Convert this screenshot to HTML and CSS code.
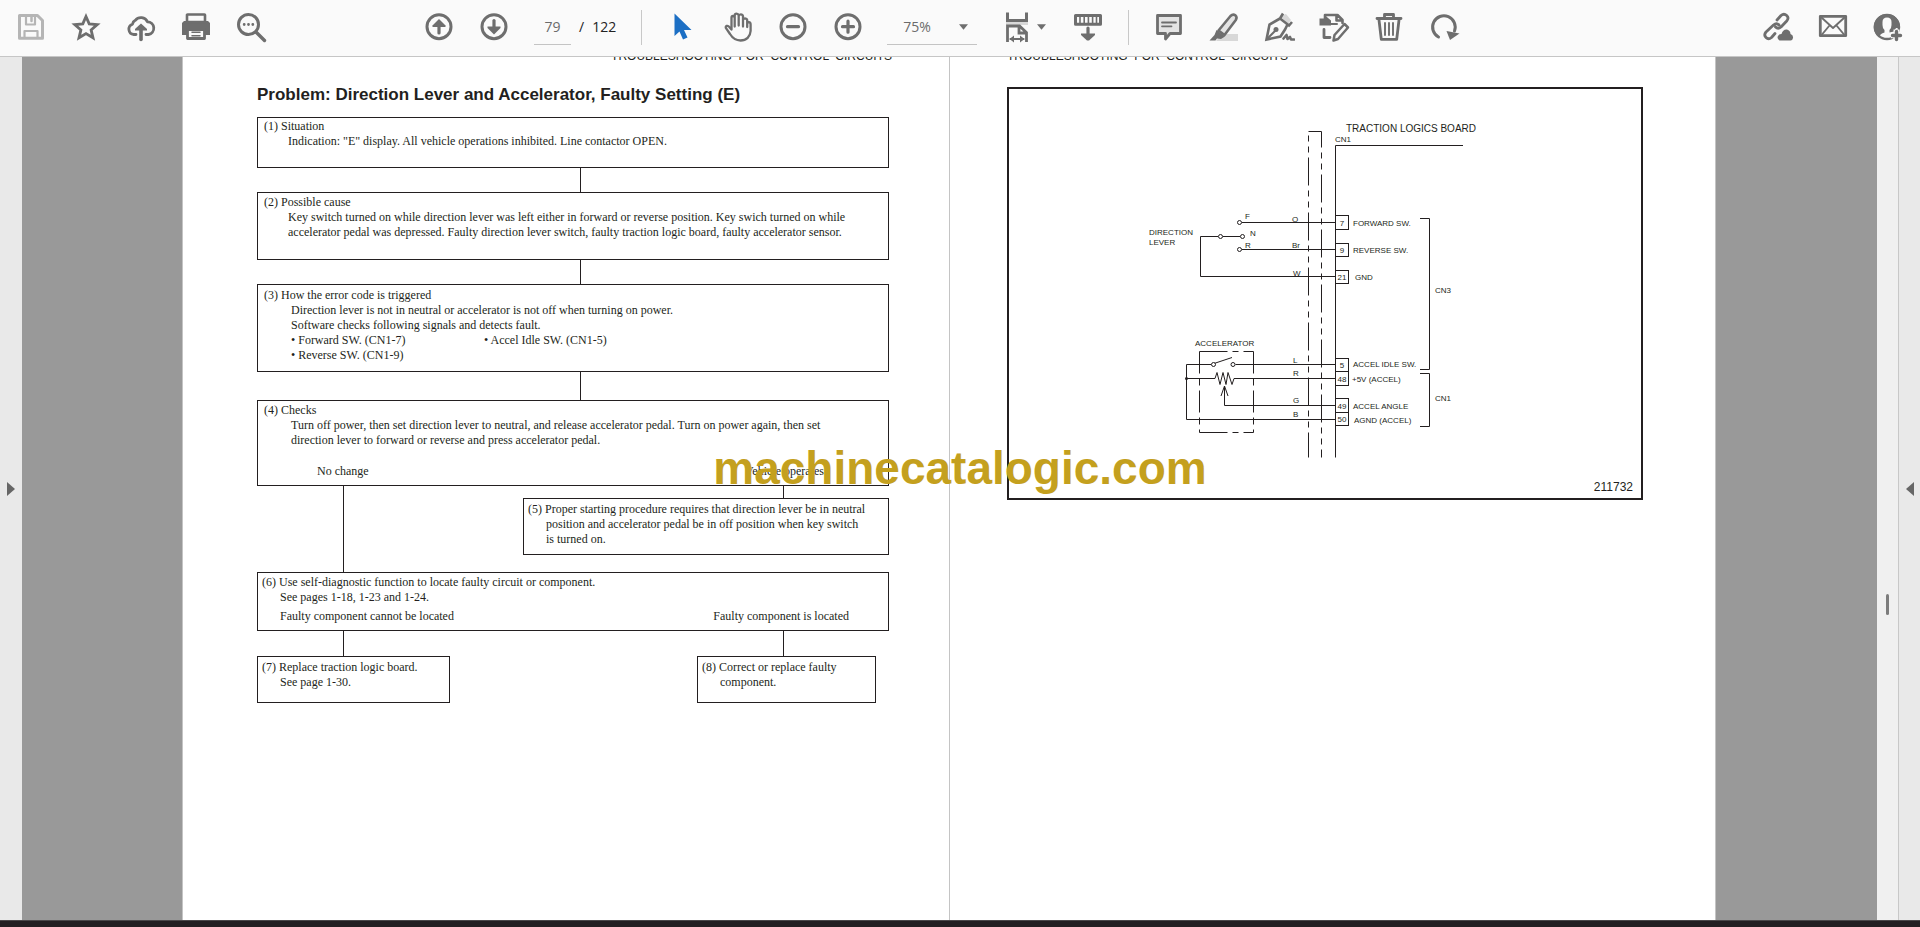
FILE: index.html
```html
<!DOCTYPE html>
<html lang="en">
<head>
<meta charset="utf-8">
<title>Service manual – page 79</title>
<link rel="stylesheet" href="styles.css">
</head>
<body>
<div class="app">
  <header class="toolbar">
    <div class="group group-file">
      <button class="tool tool-disabled" aria-label="Save" disabled>
        <svg class="icon" viewBox="0 0 32 32"><path d="M4.500 4.500H22.500L27.500 9.500V27.300H4.500Z" stroke-width="3"/><path d="M11 4V13.500H20V4M9.500 27V20H22.500V27" stroke-width="2.200"/><path d="M16.500 6V10" stroke-width="2.500"/></svg>
      </button>
      <button class="tool" aria-label="Star">
        <svg class="icon" viewBox="0 0 32 32"><path class="sharp" d="M16 5.500L19.200 12.900 27.200 13.600 21.100 18.900 23 26.800 16 22.600 9 26.800 10.900 18.900 4.800 13.600 12.800 12.900Z" stroke-width="2.800"/></svg>
      </button>
      <button class="tool" aria-label="Upload to cloud">
        <svg class="icon" viewBox="0 0 32 32"><path d="M11 23.500H8.800A5.300 5.300 0 0 1 7.500 13.200 5 5 0 0 1 10.300 9.300 7.300 7.300 0 0 1 22.500 10.800 6.400 6.400 0 0 1 23.500 23.500H21" stroke-width="2.800"/><path d="M16 16V28.500" stroke-width="3.600"/><path class="solid" d="M10 19.500V18L16 12.500 22 18V19.500Z"/></svg>
      </button>
      <button class="tool" aria-label="Print">
        <svg class="icon" viewBox="0 0 32 32"><path class="solid" d="M4 10H28L30 12V24H2V12Z"/><path class="paper" d="M7 11V4Q7 3.500 7.500 3.500H24.500Q25 3.500 25 4V11Z" stroke-width="2.600"/><path class="paper" d="M7.500 18.500H24.500V27.500H7.500Z" stroke-width="2.800"/><path d="M12 21.300H20M12 24.700H20" stroke-width="1.500"/></svg>
      </button>
      <button class="tool" aria-label="Find">
        <svg class="icon" viewBox="0 0 32 32"><circle cx="13.500" cy="13.500" r="10" stroke-width="3"/><path d="M21 21L29.500 29.500" stroke-width="3.400"/><path d="M9.200 13.500V13.600M13.500 13.500V13.600M17.800 13.500V13.600" stroke-width="2.800"/></svg>
      </button>
    </div>

    <div class="group group-nav">
      <button class="tool" aria-label="Previous page">
        <svg class="icon" viewBox="0 0 32 32"><circle cx="16" cy="15.700" r="12" stroke-width="3"/><path d="M16 11V22" stroke-width="3.200"/><path class="solid" d="M9.500 16V14.500L16 8 22.500 14.500V16Z"/></svg>
      </button>
      <button class="tool" aria-label="Next page">
        <svg class="icon" viewBox="0 0 32 32"><circle cx="16" cy="15.700" r="12" stroke-width="3"/><path d="M16 9.500V20" stroke-width="3.200"/><path class="solid" d="M9.500 15.500V17L16 23.500 22.500 17V15.500Z"/></svg>
      </button>
    </div>

    <div class="page-count">
      <input class="page-input" type="text" value="79" aria-label="Page number">
      <span>/</span>
      <span>122</span>
    </div>
    <span class="divider"></span>

    <div class="group">
      <button class="tool" aria-label="Select">
        <svg class="icon" viewBox="0 0 32 32"><path class="pointer" d="M7.500 2.500V25L12.500 20.500 16 28.500 20.500 26.500 17 19H24.500Z"/></svg>
      </button>
      <button class="tool" aria-label="Hand">
        <svg class="icon" viewBox="0 0 32 32"><path d="M9.500 18.500V6.800Q9.500 5 11 5T12.700 6.800V15.500M12.700 8V4.500Q12.800 2.700 14.500 2.700T16.700 4.500V14.500M16.700 5Q17 3.400 18.800 3.400T21 5.200V15.500M21 8.500Q21.500 7.300 23 7.300 25 7.500 25.200 9V16M25.200 12.500Q25.600 11.200 26.800 11.200 28.600 11.400 28.600 13.500V20C28.300 25.500 24.500 29.500 18.500 29.500 13 29.500 10.500 27 8 23L4 17.200Q3.200 15.500 4.700 14.900 6.200 14.500 7.300 15.900L9.500 18.500" stroke-width="2.300"/></svg>
      </button>
      <button class="tool" aria-label="Zoom out">
        <svg class="icon" viewBox="0 0 32 32"><circle cx="16" cy="15.700" r="12" stroke-width="3"/><path d="M10.500 15.700H21.500" stroke-width="3.200"/></svg>
      </button>
      <button class="tool" aria-label="Zoom in">
        <svg class="icon" viewBox="0 0 32 32"><circle cx="16" cy="15.700" r="12" stroke-width="3"/><path d="M10.500 15.700H21.500M16 10.200V21.200" stroke-width="3.200"/></svg>
      </button>
    </div>

    <div class="zoom">
      <select class="zoom-select" aria-label="Zoom level"><option>75%</option></select>
      <svg class="caret" viewBox="0 0 10 6"><path class="solid" d="M0 0H10L5 6Z"/></svg>
    </div>

    <button class="tool tool-menu" aria-label="Page fit">
      <svg class="icon" viewBox="0 0 32 32"><path class="tint" d="M5 10H27V14H5Z"/><path class="sharp" d="M6.500 1.500V9.500H25.500V1.500" stroke-width="3"/><path class="sharp" d="M6.500 31V15H18.500L25.500 21.500V31M18 15V22H25" stroke-width="2.800"/><path d="M9.500 28H22.500" stroke-width="2"/><path class="solid" d="M8.500 28L13 24.500V31.500ZM23.500 28L19 24.500V31.500Z"/></svg>
      <svg class="caret caret-small" viewBox="0 0 10 6"><path class="solid" d="M0 0H10L5 6Z"/></svg>
    </button>
    <button class="tool tool-keys" aria-label="Scrolling mode">
      <svg class="icon" viewBox="0 0 32 32"><path d="M3.500 4.500H28.500V13.300H3.500Z" stroke-width="3"/><path class="sharp" d="M8 6V12M12.200 6V12M16.400 6V12M20.600 6V12M24.500 6V12" stroke-width="1.600"/><path d="M16 17V27" stroke-width="3.200"/><path class="solid" d="M9 22.500H23V24L17 29.500H15L9 24Z"/></svg>
    </button>
    <span class="divider divider-tools"></span>

    <div class="group">
      <button class="tool" aria-label="Add comment">
        <svg class="icon" viewBox="0 0 32 32"><path class="tint-outline" d="M4.500 4.500H27.500V22.500H17L12.500 28V22.500H4.500Z" stroke-width="2.800"/><path d="M9 11.500H23M9 15.300H18.500" stroke-width="1.800"/></svg>
      </button>
      <button class="tool" aria-label="Highlight text">
        <svg class="icon" viewBox="0 0 32 32"><path class="tint" d="M14 23H30V30H8Z"/><path class="tint-outline" d="M10.500 19.500L22.500 5Q25 2.500 27.300 4.300 29.500 6.200 27.800 9L16.500 24Z" stroke-width="2.600"/><path class="solid" d="M8.500 19L17 25.500 13 28 9 27.500 7.500 29.500H1.500L6.500 24Z"/></svg>
      </button>
      <button class="tool" aria-label="Sign">
        <svg class="icon" viewBox="0 0 32 32"><path class="tint" d="M17 5L23 3 28 9 25 13Z"/><path class="sharp" d="M20 2.500L17 7.500 26 14.500 29 11M17 7.500L6.500 13.500 3.500 28.500 17.500 25.500 22 18.500 24.500 13.500" stroke-width="2.600"/><path d="M4 28L12.500 19.500" stroke-width="2"/><circle class="solid" cx="13" cy="18.500" r="2.500"/><path d="M20.500 27.500L23.500 24 24.500 28 27 26 28 28.500H31" stroke-width="2.600"/></svg>
      </button>
      <button class="tool" aria-label="Edit document">
        <svg class="icon" viewBox="0 0 32 32"><path class="solid" d="M1.500 7.500H6.500V4L13 9.500V14.500H1.500Z"/><path d="M7 8V4H19.500L24.500 9V12M18.500 4V9.500H24" stroke-width="2.600"/><path d="M6 18.500V26.500H12" stroke-width="2.800"/><path class="paper" d="M15.500 29.500L16.500 24 26.500 13 30 16.500 20 28Z" stroke-width="2.500"/><path d="M12 13H19" stroke-width="2"/></svg>
      </button>
      <button class="tool" aria-label="Delete">
        <svg class="icon" viewBox="0 0 32 32"><path d="M4 7.500H28M11.500 6V3.500H20.500V6" stroke-width="2.800"/><path d="M6 9L8.300 28.300H23.700L26 9" stroke-width="2.800"/><path d="M12 12V24M16 12V24M20 12V24" stroke-width="1.900"/></svg>
      </button>
      <button class="tool" aria-label="Rotate">
        <svg class="icon" viewBox="0 0 32 32"><path d="M10.500 26A11.300 11.300 0 1 1 26.500 20" stroke-width="3"/><path class="solid" d="M18.500 20L31.500 22.500 22 29Z"/></svg>
      </button>
    </div>

    <div class="group group-share">
      <button class="tool" aria-label="Share link">
        <svg class="icon" viewBox="0 0 32 32"><path d="M15 9L19 4.500Q22 2 24.700 4.500 27.300 7 24.700 10L19 16Q16 18.500 13.500 16M17 14Q14.500 11.500 11.500 14L4 21Q1.500 24 4 26.500 6.500 29 9.500 26.500L13 22.500" stroke-width="2.800"/><path class="solid" d="M17.500 29.500Q14.500 27.500 16 25 17 22.800 19.500 23 21 18 25 18.500 28.500 19.500 28.500 23 31.500 24 31 27 30.500 29.500 28.500 29.500Z"/></svg>
      </button>
      <button class="tool" aria-label="Send by email">
        <svg class="icon" viewBox="0 0 32 32"><path d="M3.300 5.300H28.700V24.700H3.300Z" stroke-width="2.800"/><path d="M4.500 6.500L16 17 27.500 6.500M5 23.500L12.500 14.500M27 23.500L19.500 14.500" stroke-width="1.900"/></svg>
      </button>
      <button class="tool" aria-label="Share with others">
        <svg class="icon" viewBox="0 0 32 32"><circle cx="15" cy="16" r="12" stroke-width="2.400"/><path class="solid" d="M15 3A13 13 0 0 0 7 26.500Q8 22.500 12.500 21.500V19Q10.500 17.500 10.500 14V11Q10.500 6.500 15 6.500T19.500 11V14Q19.500 17.500 17.500 19V21.500L22 20.500 24 17H28A13 13 0 0 0 15 3Z"/><path class="halo" d="M24.500 18.500V30M18.800 24.200H30.200" stroke-width="6"/><path d="M24.500 20.500V28.500M20.500 24.500H28.500" stroke-width="3.400"/></svg>
      </button>
    </div>
  </header>

  <main class="viewer">
    <aside class="rail">
      <button class="rail-toggle" aria-label="Show navigation pane"><svg class="arrow" viewBox="0 0 8 14"><path class="solid" d="M0 0L8 7 0 14Z"/></svg></button>
    </aside>

    <div class="workspace">
      <article class="sheet sheet-left">
        <p class="running-head running-head-left">TROUBLESHOOTING &nbsp;FOR &nbsp;CONTROL &nbsp;CIRCUITS</p>
        <h1 class="title">Problem: Direction Lever and Accelerator, Faulty Setting (E)</h1>

        <section class="step step-1">
          <p>(1) Situation</p>
          <p class="detail">Indication: "E" display. All vehicle operations inhibited. Line contactor OPEN.</p>
        </section>
        <div class="link link-center link-24"></div>
        <section class="step step-2">
          <p>(2) Possible cause</p>
          <p class="detail">Key switch turned on while direction lever was left either in forward or reverse position. Key swich turned on while<br>accelerator pedal was depressed. Faulty direction lever switch, faulty traction logic board, faulty accelerator sensor.</p>
        </section>
        <div class="link link-center link-24"></div>
        <section class="step step-3">
          <p>(3) How the error code is triggered</p>
          <div class="detail detail-deep">
            <p>Direction lever is not in neutral or accelerator is not off when turning on power.</p>
            <p>Software checks following signals and detects fault.</p>
            <ul class="signals">
              <li>• Forward SW. (CN1-7)</li>
              <li>• Accel Idle SW. (CN1-5)</li>
              <li>• Reverse SW. (CN1-9)</li>
            </ul>
          </div>
        </section>
        <div class="link link-center link-28"></div>
        <section class="step step-4">
          <p>(4) Checks</p>
          <p class="detail detail-deep">Turn off power, then set direction lever to neutral, and release accelerator pedal. Turn on power again, then set<br>direction lever to forward or reverse and press accelerator pedal.</p>
          <div class="outcomes outcomes-checks"><span>No change</span><span>Vehicle operates</span></div>
        </section>

        <div class="split">
          <div class="link link-left"></div>
          <div class="side">
            <div class="link link-side"></div>
            <section class="step step-tight step-5">
              <p>(5) Proper starting procedure requires that direction lever be in neutral</p>
              <p class="detail detail-hang">position and accelerator pedal be in off position when key switch<br>is turned on.</p>
            </section>
          </div>
        </div>

        <section class="step step-tight step-6">
          <p>(6) Use self-diagnostic function to locate faulty circuit or component.</p>
          <p class="detail detail-hang">See pages 1-18, 1-23 and 1-24.</p>
          <div class="outcomes outcomes-located"><span>Faulty component cannot be located</span><span>Faulty component is located</span></div>
        </section>
        <div class="split split-short">
          <div class="link link-left"></div>
          <div class="link link-right"></div>
        </div>
        <div class="results">
          <section class="step step-tight step-7">
            <p>(7) Replace traction logic board.</p>
            <p class="detail detail-hang">See page 1-30.</p>
          </section>
          <section class="step step-tight step-8">
            <p>(8) Correct or replace faulty</p>
            <p class="detail detail-hang">component.</p>
          </section>
        </div>
      </article>

      <article class="sheet sheet-right">
        <p class="running-head">TROUBLESHOOTING &nbsp;FOR &nbsp;CONTROL &nbsp;CIRCUITS</p>
        <figure class="figure">
          <svg class="schematic" viewBox="1009 89 632 409" role="img" aria-label="Traction logics board wiring">
            <!-- board outline and harness -->
            <g class="wire">
              <path d="M1463 145.500H1335.500V457.500M1308.500 131.500H1321.500"/>
              <path d="M1308.500 131.500V457.500" stroke-dasharray="28 5 6 5 6 5" stroke-dashoffset="29"/>
              <path d="M1321.500 131.500V457.500" stroke-dasharray="28 5 6 5 6 5" stroke-dashoffset="12"/>
              <!-- direction lever -->
              <path d="M1242 222.500H1335M1242 249.500H1335M1223 236.500H1240M1218 236.500H1200.500V276.500H1335"/>
              <circle cx="1239.500" cy="222.500" r="2"/><circle cx="1239.500" cy="249.500" r="2"/><circle cx="1220.500" cy="236.500" r="2"/><circle cx="1242.500" cy="236.500" r="2"/>
              <!-- accelerator -->
              <path d="M1199.500 351.500V432.500M1253.500 351.500V432.500" stroke-dasharray="22 5 7 5"/>
              <path d="M1199.500 351.500H1253.500M1199.500 432.500H1253.500" stroke-dasharray="28 5 6 5"/>
              <path d="M1211 364.500H1186.500V419.500H1335M1235.500 364.500H1335M1214 363.500L1232 357.500"/>
              <circle cx="1213.500" cy="364.500" r="2"/><circle cx="1233" cy="364.500" r="2"/>
              <path d="M1186.500 378.500H1215L1217 372.500 1220 384.500 1223 372.500 1226 384.500 1228 372.500 1232 384.500 1234 378.500H1335"/>
              <path d="M1335 405.500H1224.500V386M1221 396L1224.500 386 1228 396"/>
              <!-- connector brackets -->
              <path d="M1420 218.500H1429.500V369.500H1420M1420 373.500H1429.500V426.500H1420"/>
              <!-- terminals -->
              <rect x="1335.500" y="215.500" width="13" height="14"/><rect x="1335.500" y="243.500" width="13" height="13"/><rect x="1335.500" y="270.500" width="13" height="13"/>
              <rect x="1335.500" y="358.500" width="13" height="13"/><rect x="1335.500" y="371.500" width="13" height="14"/><rect x="1335.500" y="398.500" width="13" height="14"/><rect x="1335.500" y="412.500" width="13" height="13"/>
            </g>
            <circle class="node" cx="1186.500" cy="378.500" r="1.500"/>
            <g class="label">
              <text class="label-board" x="1346" y="132">TRACTION LOGICS BOARD</text>
              <text x="1335" y="142">CN1</text>
              <text x="1149" y="235">DIRECTION</text><text x="1149" y="245">LEVER</text>
              <text x="1245" y="219">F</text><text x="1250" y="236">N</text><text x="1245" y="248">R</text>
              <text x="1292" y="222">O</text><text x="1292" y="248">Br</text><text x="1293" y="276">W</text>
              <text x="1195" y="346">ACCELERATOR</text>
              <text x="1293" y="363">L</text><text x="1293" y="376">R</text><text x="1293" y="403">G</text><text x="1293" y="417">B</text>
              <text x="1353" y="226">FORWARD SW.</text><text x="1353" y="253">REVERSE SW.</text><text x="1355" y="280">GND</text>
              <text x="1353" y="367">ACCEL IDLE SW.</text><text x="1352" y="382">+5V (ACCEL)</text><text x="1353" y="409">ACCEL ANGLE</text><text x="1354" y="423">AGND (ACCEL)</text>
              <text x="1435" y="293">CN3</text><text x="1435" y="401">CN1</text>
            </g>
            <g class="label label-pin">
              <text x="1342" y="226">7</text><text x="1342" y="253">9</text><text x="1342" y="280">21</text>
              <text x="1342" y="368">5</text><text x="1342" y="382">48</text><text x="1342" y="409">49</text><text x="1342" y="422">50</text>
            </g>
            <text class="label label-number" x="1633" y="491">211732</text>
          </svg>
        </figure>
      </article>
    </div>

    <div class="scrollbar"><span class="scroll-thumb"></span></div>
    <aside class="rail rail-right">
      <button class="rail-toggle" aria-label="Show tools pane"><svg class="arrow" viewBox="0 0 8 14"><path class="solid" d="M8 0L0 7 8 14Z"/></svg></button>
    </aside>
    <div class="watermark">machinecatalogic.com</div>
  </main>
  <footer class="taskbar"></footer>
</div>
</body>
</html>
```

FILE: styles.css
```css
* {
  box-sizing: border-box;
}

body,
p,
h1,
ul,
figure {
  margin: 0;
  padding: 0;
}

body {
  background: #fff;
  color: #231f20;
  font-family: "Liberation Sans", Arial, sans-serif;
}

.app {
  display: flex;
  flex-direction: column;
  height: 100vh;
  overflow: hidden;
}

/* Toolbar */

.toolbar {
  display: flex;
  align-items: center;
  flex: none;
  height: 57px;
  padding: 0 12px 2px 11px;
  background: #fafafa;
  border-bottom: 1px solid #c6c6c6;
}

.group {
  display: flex;
  gap: 15px;
}

.group-nav {
  margin-left: 148px;
}

.group-share {
  margin-left: auto;
}

.tool {
  display: flex;
  align-items: center;
  justify-content: center;
  width: 40px;
  height: 32px;
  padding: 0;
  background: none;
  border: 0;
  color: #6e6e6e;
}

.tool-disabled {
  color: #b5b5b5;
}

.tool-menu {
  justify-content: flex-start;
  width: 52px;
  margin-left: 20px;
  padding-left: 4px;
}

.tool-keys {
  margin-left: 19px;
}

.icon {
  flex: none;
  width: 32px;
  height: 32px;
  fill: none;
  stroke: currentColor;
  stroke-linecap: round;
  stroke-linejoin: round;
}

.icon .sharp {
  stroke-linecap: butt;
  stroke-linejoin: miter;
}

.solid {
  fill: currentColor;
  stroke: none;
}

.icon .paper {
  fill: #fafafa;
}

.icon .tint {
  fill: #d8d8d8;
  stroke: none;
}

.icon .tint-outline {
  fill: #e4e4e4;
}

.icon .halo {
  stroke: #fafafa;
  stroke-linecap: butt;
}

.icon .pointer {
  fill: #1c6fc4;
  stroke: none;
}

.caret {
  flex: none;
  width: 9px;
  height: 6px;
  color: #6e6e6e;
}

.caret-small {
  margin-left: 4px;
}

.page-count {
  display: flex;
  align-items: center;
  gap: 8px;
  margin-left: 20px;
  font: 14px/20px "Open Sans", sans-serif;
  color: #222;
}

.page-input,
.zoom-select {
  height: 35px;
  padding: 0;
  background: none;
  border: 0;
  border-bottom: 1px solid #c4c4c4;
  border-radius: 0;
  font: 14px/20px "Open Sans", sans-serif;
  color: #6b6b6b;
}

.page-input {
  width: 37px;
  text-align: center;
}

.divider {
  width: 1px;
  height: 35px;
  margin: 0 21px 0 25px;
  background: #c8c8c8;
}

.divider-tools {
  margin: 0 20px;
}

.zoom {
  display: flex;
  align-items: center;
  margin-left: 19px;
}

.zoom-select {
  width: 90px;
  margin-right: -18px;
  padding: 0 0 0 16px;
  appearance: none;
}

.zoom .caret {
  margin-right: 9px;
  pointer-events: none;
}

/* Viewer */

.viewer {
  position: relative;
  display: flex;
  flex: 1;
  min-height: 0;
}

.rail {
  display: flex;
  align-items: center;
  justify-content: center;
  flex: none;
  width: 22px;
  background: #e9e9e9;
}

.rail-right {
  border-left: 1px solid #c8c8c8;
}

.rail-toggle {
  display: flex;
  padding: 0;
  background: none;
  border: 0;
  color: #666;
}

.arrow {
  width: 8px;
  height: 14px;
}

.workspace {
  display: flex;
  flex: 1;
  padding: 0 161px 0 160px;
  background: #999;
  overflow: hidden;
}

.scrollbar {
  display: flex;
  flex: none;
  justify-content: center;
  width: 21px;
  padding-top: 537px;
  background: #f0f0f0;
}

.scroll-thumb {
  width: 3px;
  height: 21px;
  border-radius: 2px;
  background: #7c7c7c;
}

.taskbar {
  flex: none;
  height: 7px;
  background: #221f22;
  border-top: 1px solid #4a484a;
}

.watermark {
  position: absolute;
  top: 385px;
  right: 0;
  left: 0;
  color: #c4a01e;
  font-size: 46px;
  font-weight: 700;
  line-height: 52px;
  text-align: center;
  pointer-events: none;
}

/* Document sheets */

.sheet {
  flex: none;
  width: 50%;
  background: #fff;
  border-left: 1px solid #c4c4c4;
}

.sheet-left {
  padding: 0 60px 0 74px;
  font: 12px/15px "Liberation Serif", "Times New Roman", serif;
}

.sheet-right {
  padding: 0 72px 0 57px;
  border-right: 1px solid #c4c4c4;
}

.running-head {
  margin: -9px 0 23px;
  font: 12px/16px "Liberation Sans", Arial, sans-serif;
}

.running-head-left {
  margin-right: -3px;
  margin-bottom: 21px;
  text-align: right;
}

.title {
  margin-bottom: 12px;
  font: 700 17px/20px "Liberation Sans", Arial, sans-serif;
  white-space: nowrap;
}

/* Flowchart */

.step {
  padding: 2px 6px;
  border: 1px solid #231f20;
  white-space: nowrap;
}

.step-tight {
  padding: 3px 4px;
}

.step-1 {
  min-height: 51px;
  padding-top: 1px;
}

.step-2 {
  min-height: 68px;
}

.step-3 {
  min-height: 88px;
  padding-top: 3px;
}

.step-4 {
  min-height: 86px;
}

.step-5 {
  min-height: 57px;
}

.step-6 {
  min-height: 59px;
  padding-top: 2px;
}

.step-7,
.step-8 {
  min-height: 47px;
}

.step-7 {
  width: 193px;
}

.step-8 {
  width: 179px;
}

.detail {
  padding-left: 24px;
}

.detail-deep {
  padding-left: 27px;
}

.detail-hang {
  padding-left: 18px;
}

.signals {
  display: grid;
  grid-template-columns: 193px auto;
  list-style: none;
}

.outcomes {
  display: flex;
  justify-content: space-between;
}

.outcomes-checks {
  padding: 16px 58px 0 53px;
}

.outcomes-located {
  padding: 4px 35px 0 18px;
}

.link {
  flex: none;
  width: 1px;
  background: #231f20;
}

.link-center {
  margin-left: 323px;
}

.link-24 {
  height: 24px;
}

.link-28 {
  height: 28px;
}

.link-left {
  margin-left: 86px;
}

.link-right {
  margin-right: 105px;
}

.link-side {
  height: 12px;
  margin-left: 260px;
}

.split {
  display: flex;
  justify-content: space-between;
}

.split-short {
  height: 25px;
}

.side {
  width: 366px;
  padding-bottom: 17px;
}

.results {
  display: flex;
  justify-content: space-between;
  padding-right: 13px;
}

/* Wiring figure */

.figure {
  border: 2px solid #231f20;
}

.schematic {
  display: block;
  width: 100%;
  height: auto;
}

.wire {
  fill: none;
  stroke: #231f20;
  stroke-width: 1;
}

.wire circle,
.wire rect {
  fill: #fff;
}

.node {
  fill: #231f20;
}

.label {
  fill: #231f20;
  font-size: 8px;
}

.label-board {
  font-size: 10px;
}

.label-pin {
  text-anchor: middle;
}

.label-number {
  font-size: 12px;
  text-anchor: end;
}
```
